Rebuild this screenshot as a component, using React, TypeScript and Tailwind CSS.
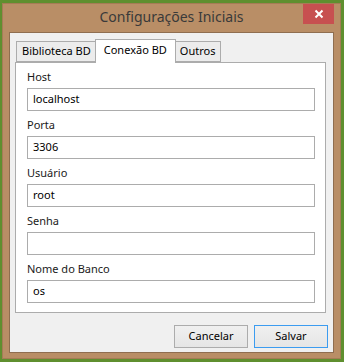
const fields = [
  { label: "Host", value: "localhost" },
  { label: "Porta", value: "3306" },
  { label: "Usuário", value: "root" },
  { label: "Senha", value: "" },
  { label: "Nome do Banco", value: "os" },
]

const tabs = ["Biblioteca BD", "Conexão BD", "Outros"]

function CloseIcon() {
  return (
    <svg width="10" height="10" viewBox="0 0 10 10">
      <path d="M1.5 1.5 L8.5 8.5 M8.5 1.5 L1.5 8.5" stroke="#fff" strokeWidth="2" />
    </svg>
  )
}

export default function App() {
  return (
    <div
      className="w-[344px] h-[362px] bg-[#5f8f2f] pl-[2px] pt-[3px] overflow-hidden"
      style={{ fontFamily: '"Segoe UI", "Noto Sans", sans-serif' }}
    >
      <div className="w-[339px] h-[356px] bg-[#b98e66] border border-[#a57c56] flex flex-col">
        {/* title bar */}
        <div className="relative h-[28px] flex items-center justify-center shrink-0">
          <span className="text-[14px] text-[#3a3a3a] leading-none -mt-[2px]">Configurações Iniciais</span>
          <div className="absolute right-[6px] top-0 w-[31px] h-[20px] bg-[#c75050] flex items-center justify-center">
            <CloseIcon />
          </div>
        </div>

        {/* client area */}
        <div className="ml-[6px] w-[325px] h-[321px] border border-[#8f6e50] bg-[#f0f0f0] flex flex-col">
          <div className="pl-[5px] pt-[6px]">
            <div className="flex items-end h-[23px] pl-[1px]">
              {tabs.map((t) =>
                t === "Conexão BD" ? (
                  <div
                    key={t}
                    className="relative z-10 -mb-[1px] -mx-[2px] h-[24px] px-[8px] bg-white border border-b-0 border-[#acacac] text-[11px] text-black flex items-start pt-[2px]"
                  >
                    {t}
                  </div>
                ) : (
                  <div
                    key={t}
                    className="h-[21px] px-[5px] bg-[#ececec] border border-[#acacac] text-[11px] text-black flex items-center"
                  >
                    {t}
                  </div>
                )
              )}
            </div>
            <div className="w-[311px] h-[251px] bg-white border border-[#acacac] pt-[6px] pl-[11px] flex flex-col gap-[6px]">
              {fields.map((f) => (
                <div key={f.label} className="flex flex-col">
                  <div className="h-[16px] leading-[16px] text-[11px] text-[#1a1a1a] mb-[3px]">{f.label}</div>
                  <div className="w-[288px] h-[23px] border border-[#acacac] bg-white flex items-center pl-[5px] text-[11px] text-black">
                    {f.value}
                  </div>
                </div>
              ))}
            </div>
          </div>

          <div className="flex justify-end gap-[6px] mt-[12px] pr-[5px]">
            <button className="w-[74px] h-[23px] border border-[#acacac] bg-gradient-to-b from-[#f0f0f0] to-[#e5e5e5] text-[11px] text-black">
              Cancelar
            </button>
            <button className="w-[74px] h-[23px] border border-[#3c9cf0] bg-gradient-to-b from-[#f0f0f0] to-[#e5e5e5] text-[11px] text-black">
              Salvar
            </button>
          </div>
        </div>
      </div>
    </div>
  )
}
